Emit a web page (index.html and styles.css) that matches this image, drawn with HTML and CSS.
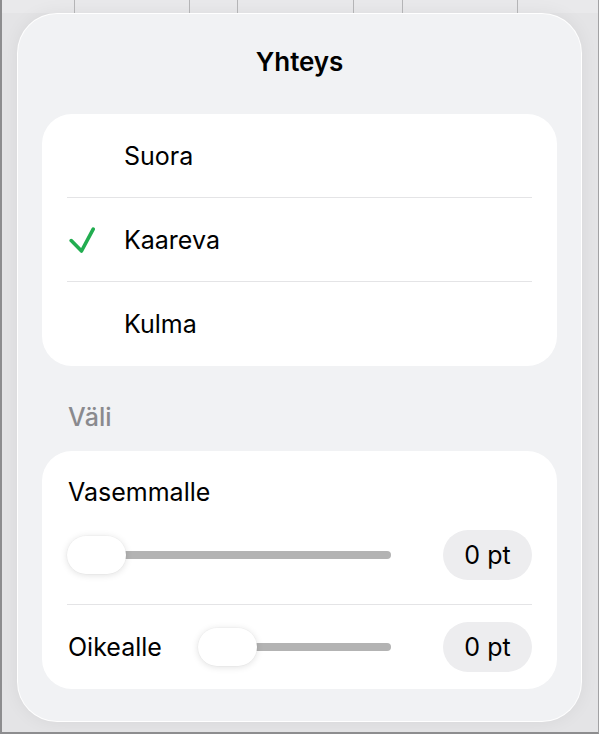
FILE: index.html
```html
<!DOCTYPE html>
<html lang="fi">
<head>
<meta charset="utf-8">
<title>Yhteys</title>
<link rel="stylesheet" href="styles.css">
</head>
<body>
<div class="screen">
  <div class="backdrop-strip">
    <span class="cell c1"></span>
    <span class="cell c2"></span>
    <span class="cell c3"></span>
    <span class="cell c4"></span>
    <span class="cell c5"></span>
    <span class="cell c6"></span>
    <span class="cell c7"></span>
  </div>
  <div class="panel">
    <div class="title">Yhteys</div>
    <div class="card">
      <div class="option">
        <span class="check-slot"></span>
        <span class="option-label">Suora</span>
      </div>
      <div class="option">
        <span class="check-slot">
          <svg class="check" width="26" height="26" viewBox="0 0 26 26">
            <path d="M2.2 13.6 L12.5 24 L24.2 2.2" fill="none" stroke="#22ad50" stroke-width="3.6" stroke-linecap="round" stroke-linejoin="round"/>
          </svg>
        </span>
        <span class="option-label">Kaareva</span>
      </div>
      <div class="option last">
        <span class="check-slot"></span>
        <span class="option-label">Kulma</span>
      </div>
    </div>
    <div class="section-header">Väli</div>
    <div class="card">
      <div class="group-top">
        <div class="field-label">Vasemmalle</div>
        <div class="slider-row">
          <div class="slider">
            <span class="thumb"></span>
            <span class="track"></span>
          </div>
          <div class="pill">0 pt</div>
        </div>
      </div>
      <div class="slider-row inline">
        <div class="field-label inline-label">Oikealle</div>
        <div class="slider">
          <span class="thumb"></span>
          <span class="track"></span>
        </div>
        <div class="pill">0 pt</div>
      </div>
    </div>
  </div>
</div>
</body>
</html>
```

FILE: styles.css
```css
html, body {
  margin: 0;
  padding: 0;
  background: #e4e4e6;
}

.screen {
  width: 599px;
  height: 734px;
  box-sizing: border-box;
  border-left: 2px solid #8d8d8f;
  border-right: 1px solid #a2a2a4;
  border-bottom: 2px solid #8d8d8f;
  background: #e4e4e6;
  overflow: hidden;
  font-family: "Inter", "Noto Sans", sans-serif;
  color: #000;
}

.backdrop-strip {
  display: flex;
  height: 13px;
  background: #e9e9eb;
}

.cell {
  box-sizing: border-box;
  height: 100%;
  border-right: 1px solid #b4b4b6;
  flex: none;
}
.c1 { width: 73px; }
.c2 { width: 115px; }
.c3 { width: 48px; }
.c4 { width: 116px; }
.c5 { width: 49px; }
.c6 { width: 115px; }
.c7 { flex: 1; border-right: none; }

.panel {
  box-sizing: border-box;
  margin-left: 15px;
  width: 565px;
  height: 709px;
  padding: 0 24px;
  border-radius: 40px;
  background: #f1f2f4;
  border: 1px solid rgba(255, 255, 255, 0.95);
  box-shadow: 0 0 18px rgba(0, 0, 0, 0.06);
}

.title {
  padding: 34px 0 38px;
  line-height: 28px;
  font-size: 26px;
  font-weight: 600;
  text-align: center;
  letter-spacing: -0.1px;
}

.card {
  background: #ffffff;
  border-radius: 30px;
  padding: 0 25px;
}

.option {
  box-sizing: border-box;
  height: 84px;
  display: flex;
  align-items: center;
  border-bottom: 1px solid #e4e4e6;
}
.option.last {
  border-bottom: none;
}

.check-slot {
  width: 57px;
  flex: none;
  display: flex;
  align-items: center;
}

.check {
  display: block;
  margin-left: 2px;
  margin-top: 1px;
}

.option-label,
.field-label,
.pill {
  font-size: 25px;
  line-height: 28px;
}

.section-header {
  padding: 37px 0 20px 26px;
  font-size: 25px;
  line-height: 28px;
  font-weight: 500;
  color: #8a8a8e;
}

.group-top {
  padding: 27px 0 24px;
  border-bottom: 1px solid #e4e4e6;
}

.field-label {
  padding-left: 1px;
}

.slider-row {
  display: flex;
  align-items: center;
  gap: 52px;
  height: 50px;
  margin-top: 24px;
}

.slider-row.inline {
  height: 84px;
  margin-top: 0;
  gap: 0;
}

.inline-label {
  width: 130px;
  flex: none;
}

.slider-row.inline .slider {
  margin-right: 52px;
}

.slider {
  flex: 1;
  display: flex;
  align-items: center;
  height: 38px;
}

.thumb {
  position: relative;
  z-index: 1;
  flex: none;
  width: 59px;
  height: 38px;
  border-radius: 19px;
  background: #ffffff;
  box-shadow: 0 1px 7px rgba(0, 0, 0, 0.13), 0 0 0 0.5px rgba(0, 0, 0, 0.03);
}

.track {
  flex: 1;
  height: 8px;
  margin-left: -8px;
  border-radius: 4px;
  background: #b3b3b3;
}

.pill {
  flex: none;
  width: 89px;
  height: 50px;
  border-radius: 25px;
  background: #ededef;
  display: flex;
  align-items: center;
  justify-content: center;
}
```
